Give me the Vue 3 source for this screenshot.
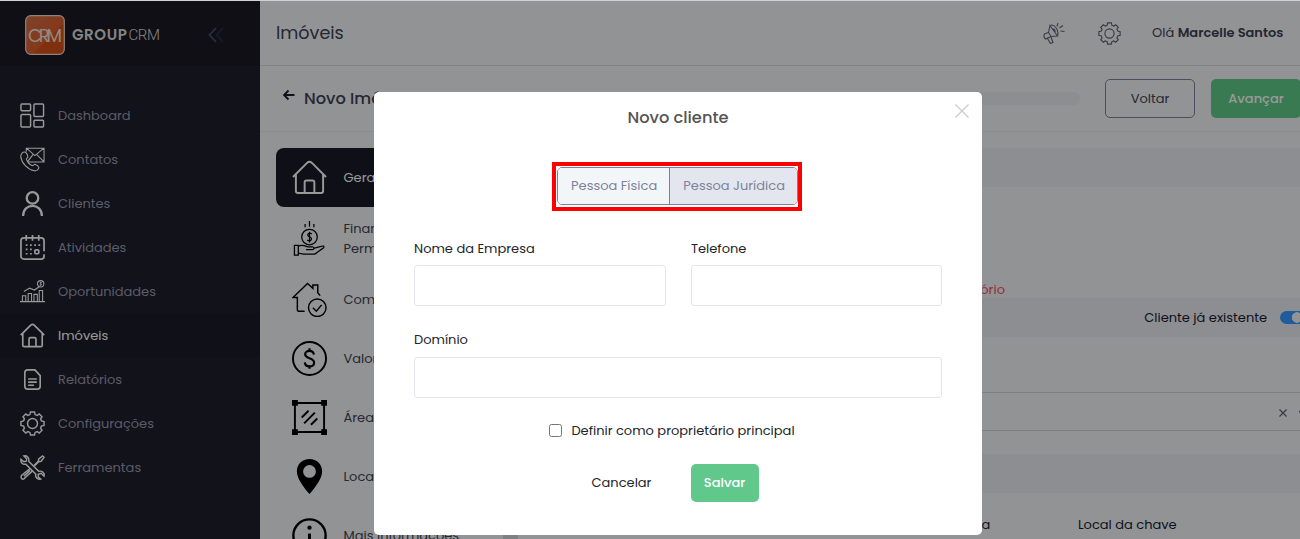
<script setup>
import { ref } from 'vue'

const navItems = [
	{ icon: 'dashboard', label: 'Dashboard' },
	{ icon: 'contacts', label: 'Contatos' },
	{ icon: 'user', label: 'Clientes' },
	{ icon: 'calendar', label: 'Atividades' },
	{ icon: 'chart', label: 'Oportunidades' },
	{ icon: 'home', label: 'Imóveis', active: true },
	{ icon: 'file', label: 'Relatórios' },
	{ icon: 'gear', label: 'Configurações' },
	{ icon: 'tools', label: 'Ferramentas' }
]

const steps = [
	{ icon: 'home', label: 'Geral', active: true },
	{ icon: 'hand', label: 'Financeiro e Permuta' },
	{ icon: 'house-check', label: 'Comodidades' },
	{ icon: 'dollar', label: 'Valores' },
	{ icon: 'area', label: 'Áreas' },
	{ icon: 'pin', label: 'Localização' },
	{ icon: 'info', label: 'Mais informações' }
]

const personType = ref('juridica')
const company = ref('')
const phone = ref('')
const domain = ref('')
const mainOwner = ref(false)
</script>

<template>
	<div class="page">
		<!-- Icon sprite -->
		<svg class="sprite" aria-hidden="true">
			<symbol id="dashboard" viewBox="0 0 26 26">
				<rect x="1" y="1" width="10" height="7" rx="1" />
				<rect x="14.500" y="1" width="10" height="13" rx="1" />
				<rect x="1" y="12" width="10" height="13" rx="1" />
				<rect x="14.500" y="18" width="10" height="7" rx="1" />
			</symbol>
			<symbol id="contacts" viewBox="0 0 26 26" stroke-width="1.100">
				<path d="M6.500 5V1.300H25V15.500H8M7 1.500L15.500 9L24.500 1.500M8 15L13.500 8M24.500 15L17.500 8" />
				<path d="M5 5.200C3 4.800 .8 7 .8 10C1.500 16.500 8 23.500 15 24.800C17.500 25 19.500 23 19.700 21.500C19 19.500 17 18.500 15.500 18L13 19.500C10.500 18.500 7.500 15 6.500 12.500L8.200 10.500C8 8.500 6.500 5.800 5 5.200Z" />
			</symbol>
			<symbol id="user" viewBox="0 0 26 26" stroke-width="2.400">
				<circle cx="13" cy="7.200" r="6" />
				<path d="M3.200 26C3.200 12 22.800 12 22.800 26" />
			</symbol>
			<symbol id="calendar" viewBox="0 0 26 26" stroke-width="1.800">
				<path d="M18 25H4A3 3 0 0 1 1 22V6A3 3 0 0 1 4 3H22A3 3 0 0 1 25 6V17M25 20V22A3 3 0 0 1 22 25H17M6.500 0V6M13 0V6M19.500 0V6" />
				<path d="M6 10.500H21M6 15H14M6 19.500H14" stroke-dasharray="1.800 2.600" />
				<rect x="15.500" y="15.500" width="4" height="4" rx="1" />
			</symbol>
			<symbol id="chart" viewBox="0 0 26 26" stroke-width="1.100">
				<path d="M0 23.500H26M2.500 23V17.500H6V23M8.500 23V15H12V23M14.500 23V16H18V23M20 23V12H23.500V23M4 13L10 9.500L15 11.500L20 8" />
				<circle cx="21.500" cy="5" r="3.300" />
				<path d="M22.800 3.800C21 2.700 19.800 4.500 21.500 5C23.300 5.500 22 7.300 20.200 6.300M21.500 2.800V7.200" stroke-width=".8" />
			</symbol>
			<symbol id="home" viewBox="0 0 36 36">
				<path d="M1 17.500L15.500 3Q18 .8 20.500 3L35 17.500M4 15V32Q4 34 6 34H30Q32 34 32 32V15M13 34V23Q13 21 15 21H21Q23 21 23 23V34" />
			</symbol>
			<symbol id="file" viewBox="0 0 26 26" stroke-width="1.700">
				<path d="M15.500 3H8Q5 3 5 6V20Q5 23 8 23H18Q21 23 21 20V9ZM8.500 12.500H17.500M8.500 15.700H17.500M8.500 19H14.500" />
			</symbol>
			<symbol id="gear" viewBox="0 0 26 26">
				<circle cx="13" cy="13" r="5.200" />
				<path d="M10.900 1H15.100L15.700 3.700L17.900 4.600L20 3.100L22.900 6L21.400 8.100L22.300 10.300L25 10.900V15.100L22.300 15.700L21.400 17.900L22.900 20L20 22.900L17.900 21.400L15.700 22.300L15.100 25H10.900L10.300 22.300L8.100 21.400L6 22.900L3.100 20L4.600 17.900L3.700 15.700L1 15.100V10.900L3.700 10.300L4.600 8.100L3.100 6L6 3.100L8.100 4.600L10.300 3.700Z" />
			</symbol>
			<symbol id="tools" viewBox="0 0 26 26" stroke-width="1.500">
				<path d="M4 1C7 .3 10 3 9 6.500L19.500 17C23 16 26 19 25 22L22 19L19 20V23L21.500 25C18 26 15.500 23 16.500 20L6 9.500C3 10.500 .3 7.500 1 4.500L4 7L6.500 6.500L7 4Z" />
				<path d="M14.500 11L19 6.500L19.500 4L23.500 1L25 2.500L22 6.500L19.500 7L15 11.500M10.500 14L1.800 21Q.2 24 2.500 25Q4 25.500 5 24L13 16.500M4 22L10.500 16" />
			</symbol>
			<symbol id="megaphone" viewBox="0 0 22 22" stroke-width="1.100">
				<path d="M5.500 10.500L7 3.500L14.500 14L8 14.500ZM7 3.500C11 1.500 16.500 8 14.500 14M5.500 10.500L1.500 12Q0 15 2.500 17L8 14.500M4.500 16.500L7.500 21.500L10 20.500L8 15M9.500 8C11 5.500 13 9 11.500 10.500M14 4.500L15 1M16.500 6L20 3.500M17.500 9L21.500 9.500" />
			</symbol>
			<symbol id="hand" viewBox="0 0 36 36" stroke-width="1.300">
				<circle cx="18" cy="16.500" r="8" />
				<path d="M20.500 13.500C17.500 11 14 14.500 18 16.300C22 18 19.500 21.700 15.500 19.500M18 11V22M13.500 3V6.500M18 0V6M22.500 3V6.500M2.500 25H6.500V35H2.500ZM6.500 26C10 24 13 25.500 16 26.500H21Q24 27.500 21.500 29.500L14.500 29.500M23 28L30 26Q34 25 32.500 27.500L23.500 34H12L6.500 33" />
			</symbol>
			<symbol id="house-check" viewBox="0 0 36 36" stroke-width="1.500">
				<path d="M13 30H7Q5.500 30 5.500 28V16H1L16 1.500L21.500 6.500V3H26.500V11L29 14" />
				<circle cx="26" cy="26.500" r="9" />
				<path d="M21.500 26.500L25 30L30.500 23.500" />
			</symbol>
			<symbol id="dollar" viewBox="0 0 36 36" stroke-width="2">
				<circle cx="18" cy="18" r="17" />
				<path d="M22.500 14C22 9 13.500 9 13.500 13.700C13.500 18.500 22.800 17 22.800 22.300C22.800 27.500 13.500 27.500 13.200 22M18 7.500V10.500M18 25.500V28.500" stroke-width="2.200" />
			</symbol>
			<symbol id="area" viewBox="0 0 36 36" stroke-width="2">
				<path d="M3 3H33V33H3ZM10 18L17 11M12.500 24L23.500 13M19.500 25.500L26 19" />
				<path d="M0 0H6V6H0ZM30 0H36V6H30ZM0 30H6V36H0ZM30 30H36V36H30Z" fill="currentColor" stroke="none" />
			</symbol>
			<symbol id="pin" viewBox="0 0 36 36">
				<path d="M18 0C10.500 0 5 5.500 5 12.500C5 20 12 29 18 36C24 29 31 20 31 12.500C31 5.500 25.500 0 18 0ZM18 6.200A6.600 6.600 0 1 1 18 19.400A6.600 6.600 0 1 1 18 6.200Z" fill="currentColor" fill-rule="evenodd" stroke="none" />
			</symbol>
			<symbol id="info" viewBox="0 0 36 36" stroke-width="2.400">
				<circle cx="18" cy="18" r="16.600" />
				<circle cx="18" cy="10" r="2.200" fill="currentColor" stroke="none" />
				<path d="M18 16V28" stroke-width="3" />
			</symbol>
		</svg>

		<!-- Sidebar -->
		<aside class="sidebar">
			<div class="brand">
				<svg class="logo" viewBox="0 0 40 40">
					<defs>
						<linearGradient id="logoFill" x1="0" y1="0" x2="1" y2="1">
							<stop offset="0" stop-color="#d4704a" />
							<stop offset=".58" stop-color="#dc5f2c" />
							<stop offset=".6" stop-color="#d85119" />
							<stop offset="1" stop-color="#d85119" />
						</linearGradient>
					</defs>
					<rect x=".7" y=".7" width="38.600" height="38.600" rx="5" fill="url(#logoFill)" stroke="#ecd9d0" stroke-width="1.200" />
					<text x="3" y="26.500" textLength="34" lengthAdjust="spacing">CRM</text>
				</svg>
				<span class="brand-name"><b>GROUP</b><i>CRM</i></span>
				<svg class="collapse" viewBox="0 0 16 16">
					<path d="M8 1L1.500 8L8 15" />
					<path class="faded" d="M15 1L8.500 8L15 15" />
				</svg>
			</div>
			<nav>
				<a v-for="item in navItems" :key="item.label" class="nav-item" :class="{ active: item.active }">
					<svg class="icon"><use :href="'#' + item.icon" /></svg>
					<span>{{ item.label }}</span>
				</a>
			</nav>
		</aside>

		<!-- Main -->
		<main class="main">
			<header class="topbar">
				<h1>Imóveis</h1>
				<svg class="icon mega"><use href="#megaphone" /></svg>
				<svg class="icon cog"><use href="#gear" /></svg>
				<span class="hello">Olá <b>Marcelle Santos</b></span>
			</header>

			<div class="subbar">
				<svg class="back" viewBox="0 0 12 12"><path d="M11.500 6H1M5.500 1.500L1 6L5.500 10.500" /></svg>
				<h2>Novo Imóvel</h2>
				<div class="progress"></div>
				<button class="btn-outline">Voltar</button>
				<button class="btn-next">Avançar</button>
			</div>

			<div class="body">
				<div class="steps">
					<div v-for="step in steps" :key="step.label" class="step" :class="{ active: step.active }">
						<svg class="icon"><use :href="'#' + step.icon" /></svg>
						<span>{{ step.label }}</span>
					</div>
				</div>
				<div class="scrollbar"></div>
				<div class="sections">
					<div class="band"></div>
					<div class="owner"><span class="required">Campo obrigatório</span></div>
					<div class="band existing">
						<span>Cliente já existente</span>
						<i class="toggle"></i>
					</div>
					<div class="select">
						<svg viewBox="0 0 8 8"><path d="M.5 .5L7.500 7.500M7.500 .5L.5 7.500" /></svg>
						<svg viewBox="0 0 8 8"><path d="M0 2L4 6L8 2" /></svg>
					</div>
					<div class="band"></div>
					<div class="labels">
						<span class="place">Placa</span>
						<span>Local da chave</span>
					</div>
				</div>
			</div>
		</main>

		<!-- Modal -->
		<div class="backdrop">
			<form class="modal" @submit.prevent>
				<h3>Novo cliente</h3>
				<svg class="close" viewBox="0 0 14 14"><path d="M.5 .5L13.500 13.500M13.500 .5L.5 13.500" /></svg>
				<div class="highlight">
					<div class="switch">
						<button type="button" :class="{ on: personType === 'fisica' }" @click="personType = 'fisica'">Pessoa Física</button>
						<button type="button" :class="{ on: personType === 'juridica' }" @click="personType = 'juridica'">Pessoa Jurídica</button>
					</div>
				</div>
				<div class="fields">
					<label><span>Nome da Empresa</span><input type="text" v-model="company"></label>
					<label><span>Telefone</span><input type="text" v-model="phone"></label>
					<label class="full"><span>Domínio</span><input type="text" v-model="domain"></label>
				</div>
				<label class="check">
					<input type="checkbox" v-model="mainOwner">
					<span>Definir como proprietário principal</span>
				</label>
				<div class="actions">
					<button type="button" class="cancel">Cancelar</button>
					<button type="submit" class="save">Salvar</button>
				</div>
			</form>
		</div>
	</div>
</template>

<style>
body {
	margin: 0;
	overflow: hidden;
}
</style>

<style scoped>
* {
	box-sizing: border-box;
}

.page {
	position: relative;
	display: flex;
	width: 1300px;
	height: 539px;
	overflow: hidden;
	border-top: 1px solid #cfd3d5;
	background: #f3f6f9;
	font-family: Poppins, Inter, sans-serif;
	font-size: 13px;
	color: #3f4254;
}

button,
input {
	font: inherit;
	color: inherit;
}

h1,
h2,
h3 {
	margin: 0;
	font-weight: 500;
}

.sprite {
	position: absolute;
	width: 0;
	height: 0;
}

.icon {
	flex: none;
	fill: none;
	stroke: currentColor;
	stroke-width: 1.5;
}

/* Sidebar */
.sidebar {
	flex: none;
	width: 260px;
	background: #1e1e2d;
}

.brand {
	display: flex;
	align-items: center;
	height: 65px;
	padding: 2px 0 0 25px;
	background: #1a1a23;
}

.logo {
	flex: none;
	width: 40px;
	height: 40px;
}

.logo text {
	font-size: 18px;
	font-weight: 400;
	fill: #f5e4dc;
}

.brand-name {
	flex: none;
	width: 88px;
	margin-left: 7px;
	font-size: 15px;
	white-space: nowrap;
	color: #ddd;
}

.brand-name b {
	font-weight: 600;
	letter-spacing: 0.6px;
}

.brand-name i {
	margin-left: 1px;
	font-family: Roboto, sans-serif;
	font-style: normal;
	font-weight: 300;
	letter-spacing: -0.4px;
}

.collapse {
	width: 16px;
	height: 16px;
	margin-left: 48px;
	fill: none;
	stroke: #494b74;
	stroke-width: 1.8;
}

.faded {
	opacity: 0.4;
}

nav {
	padding-top: 27px;
}

.nav-item {
	display: flex;
	align-items: center;
	height: 44px;
	padding-left: 20px;
	color: #9899ac;
}

.nav-item span {
	padding-top: 2px;
}

.nav-item .icon {
	width: 25px;
	height: 25px;
	margin-right: 13px;
	color: #fff;
}

.nav-item.active {
	background: #1b1b28;
	color: #fff;
}

.nav-item.active .icon {
	stroke-width: 2.4;
}

/* Main */
.main {
	flex: 1;
	min-width: 0;
}

.topbar {
	display: flex;
	align-items: center;
	height: 65px;
	padding-left: 16px;
	border-bottom: 1px solid #d6d9dc;
}

.topbar h1 {
	width: 767px;
	font-size: 17.55px;
	font-weight: 400;
}

.mega {
	width: 22px;
	height: 22px;
	color: #5e6278;
}

.cog {
	width: 23px;
	height: 23px;
	margin-left: 33px;
	stroke-width: 1.3;
	color: #5e6278;
}

.hello {
	margin-left: 31px;
	white-space: nowrap;
}

.hello b {
	font-weight: 600;
}

.subbar {
	display: flex;
	align-items: center;
	height: 66px;
	padding-left: 23px;
	border-bottom: 1px solid #e6e9ed;
}

.subbar > * {
	flex: none;
}

.back {
	width: 12px;
	height: 12px;
	margin: -7px 9px 0 0;
	fill: none;
	stroke: #181c32;
	stroke-width: 1.8;
}

.subbar h2 {
	width: 136px;
	font-size: 16.25px;
}

.progress {
	width: 640px;
	height: 13px;
	border-radius: 5px;
	background: #ebedf3;
}

.subbar button {
	height: 39px;
	border-radius: 5px;
}

.btn-outline {
	width: 90px;
	margin-left: 25px;
	border: 1px solid #7e8299;
	background: none;
}

.btn-next {
	width: 90px;
	margin-left: 16px;
	border: 0;
	background: #61cb89;
	font-weight: 500;
}

.subbar .btn-next {
	color: #fff;
}

.body {
	display: flex;
	height: 407px;
	padding: 16px 0 0 16px;
}

.steps {
	width: 227px;
}

.step {
	display: flex;
	align-items: center;
	height: 59px;
	padding-left: 16px;
	line-height: 20px;
}

.step:nth-child(2) {
	height: 63px;
}

.step:nth-child(2) span {
	width: 90px;
}

.step .icon {
	width: 35px;
	height: 35px;
	margin-right: 16.5px;
	stroke-width: 2;
	color: #000;
}

.step.active,
.step.active .icon {
	border-radius: 8px;
	background: #1a1a27;
	color: #fff;
}

.scrollbar {
	width: 15px;
	background: #d4d6d8;
}

.sections {
	flex: 1;
	min-width: 0;
}

.band {
	height: 39px;
	background: #ebedf3;
}

.owner {
	display: flex;
	align-items: flex-end;
	justify-content: flex-end;
	height: 111px;
	padding-right: 295px;
}

.required {
	line-height: 17px;
	color: #f64e60;
}

.existing {
	display: flex;
	align-items: center;
	justify-content: flex-end;
	gap: 13px;
	color: #181c32;
}

.toggle {
	width: 20px;
	height: 13px;
	border-radius: 7px 0 0 7px;
	background: radial-gradient(circle at 17px 6.5px, #f3f6f9 5px, #3699ff 5.5px);
}

.select {
	display: flex;
	align-items: center;
	justify-content: flex-end;
	gap: 12px;
	height: 39px;
	margin: 55px -7px 23px 0;
	padding-top: 3px;
	border: solid #d0d3d6;
	border-width: 1px 0;
}

.select svg {
	width: 8px;
	height: 8px;
	fill: none;
	stroke: #5e6278;
	stroke-width: 1.3;
}

.labels {
	display: flex;
	padding: 22px 0 0 436px;
	color: #181c32;
	white-space: nowrap;
}

.place {
	width: 124px;
}

/* Modal */
.backdrop {
	position: absolute;
	inset: 0;
	display: flex;
	padding: 91px 0 0 374px;
	background: rgba(0, 0, 0, 0.4);
}

.modal {
	position: relative;
	display: flex;
	flex-direction: column;
	align-items: center;
	width: 608px;
	height: 443px;
	padding: 14px 40px 0;
	border-radius: 5px;
	background: #fff;
	color: #212529;
}

.modal h3 {
	font-size: 16.25px;
	line-height: 24px;
	color: #545454;
}

.close {
	position: absolute;
	top: 12px;
	right: 13px;
	width: 14px;
	height: 14px;
	fill: none;
	stroke: #ccc;
	stroke-width: 1.3;
}

.highlight {
	width: 250px;
	height: 49px;
	margin: 32px 0 0 -2px;
	padding: 1px 0 1px 1px;
	border: 4px solid #f00;
}

.switch {
	display: flex;
	height: 38px;
	overflow: hidden;
	border: 1px solid #7e8299;
	border-radius: 5px;
	color: #7e8299;
}

.switch button {
	flex: 1 0 auto;
	padding: 0 12px 0 13px;
	border: 0;
	background: #f3f6f9;
}

.switch button + button {
	border-left: 1px solid #7e8299;
}

.switch button.on {
	background: #e4e6ef;
}

.fields {
	display: grid;
	grid-template-columns: 252px 251px;
	gap: 24px 25px;
	margin-top: 28px;
}

.fields label {
	display: flex;
	flex-direction: column;
	gap: 6px;
	line-height: 20px;
}

.fields input {
	width: 100%;
	height: 41px;
	border: 1px solid #e4e6ef;
	border-radius: 3px;
}

.fields .full {
	grid-column: span 2;
	gap: 7px;
}

.check {
	display: flex;
	align-items: center;
	gap: 9px;
	height: 20px;
	margin: 22px 0 0 -12px;
}

.check input {
	width: 13px;
	height: 13px;
	margin: 0;
}

.check span {
	padding-top: 1px;
}

.actions {
	display: flex;
	gap: 26px;
	margin: 24px 0 0 -20px;
}

.actions button {
	height: 38px;
	padding: 0;
	border: 0;
	border-radius: 5px;
	background: none;
}

.actions .cancel {
	width: 87px;
	padding-left: 1px;
}

.actions .save {
	width: 68px;
	background: #61c88c;
	font-weight: 500;
	color: #fff;
}
</style>
